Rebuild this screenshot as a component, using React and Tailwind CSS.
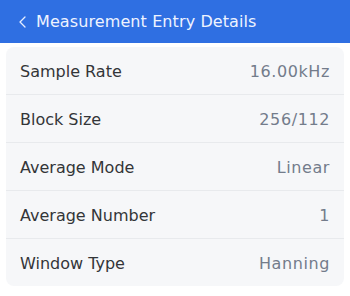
import React from "react";

const rows = [
  { label: "Sample Rate", value: "16.00kHz" },
  { label: "Block Size", value: "256/112" },
  { label: "Average Mode", value: "Linear" },
  { label: "Average Number", value: "1" },
  { label: "Window Type", value: "Hanning" },
];

const App = () => {
  return (
    <div className="w-[350px] h-[296px] bg-white font-['DejaVu_Sans',sans-serif]">
      <div className="h-[43px] bg-[#2f6fe2] flex items-center pl-[19px] text-white">
        <svg width="7" height="12" viewBox="0 0 7 12" fill="none" className="mr-[10px]">
          <path d="M6 1L1 6L6 11" stroke="#e6eeff" strokeWidth="1.3" strokeLinecap="round" strokeLinejoin="round" />
        </svg>
        <span className="text-[16px] text-[#eef3ff] tracking-[0.1px]">Measurement Entry Details</span>
      </div>

      <div className="mx-[6px] mt-[4px] rounded-[8px] bg-[#f6f7f9] flex flex-col">
        {rows.map((row, index) => (
          <div
            key={index}
            className={`flex items-center justify-between pt-[3px] px-[14px] ${
              index < rows.length - 1 ? "border-b border-[#e8eaed] h-[48px]" : "h-[47px]"
            }`}
          >
            <span className="text-[16px] text-[#333538]">{row.label}</span>
            <span className="text-[16px] text-[#737c8b] tracking-[0.6px]">{row.value}</span>
          </div>
        ))}
      </div>
    </div>
  );
};

export default App;
